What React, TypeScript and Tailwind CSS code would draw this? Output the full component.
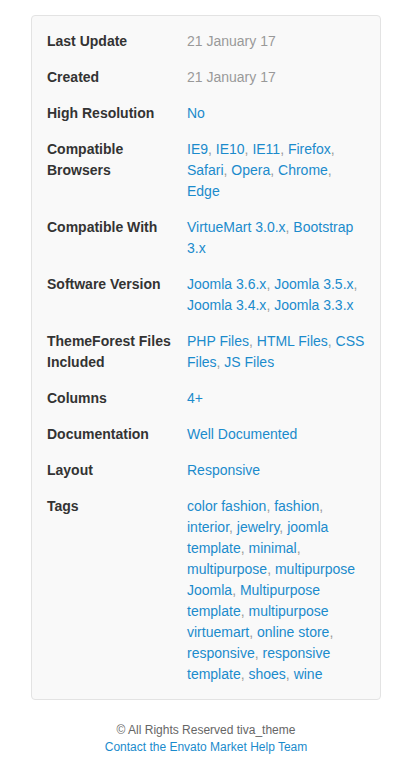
const rows: { label: string; values: string[]; plain?: boolean }[] = [
  { label: 'Last Update', values: ['21 January 17'], plain: true },
  { label: 'Created', values: ['21 January 17'], plain: true },
  { label: 'High Resolution', values: ['No'] },
  { label: 'Compatible Browsers', values: ['IE9', 'IE10', 'IE11', 'Firefox', 'Safari', 'Opera', 'Chrome', 'Edge'] },
  { label: 'Compatible With', values: ['VirtueMart 3.0.x', 'Bootstrap 3.x'] },
  { label: 'Software Version', values: ['Joomla 3.6.x', 'Joomla 3.5.x', 'Joomla 3.4.x', 'Joomla 3.3.x'] },
  { label: 'ThemeForest Files Included', values: ['PHP Files', 'HTML Files', 'CSS Files', 'JS Files'] },
  { label: 'Columns', values: ['4+'] },
  { label: 'Documentation', values: ['Well Documented'] },
  { label: 'Layout', values: ['Responsive'] },
  {
    label: 'Tags',
    values: [
      'color fashion', 'fashion', 'interior', 'jewelry', 'joomla template', 'minimal',
      'multipurpose', 'multipurpose Joomla', 'Multipurpose template', 'multipurpose virtuemart',
      'online store', 'responsive', 'responsive template', 'shoes', 'wine',
    ],
  },
];

const App = () => {
  return (
    <div className="min-h-screen bg-white pt-[15px] pb-[20px] pl-[31px] pr-[34px] font-['Liberation_Sans',Arial,sans-serif]">
      <div className="bg-[#f9f9f9] border border-[#e3e3e3] rounded-[4px] py-[7px] px-[15px]">
        {rows.map((row) => (
          <div key={row.label} className="flex py-[7.5px] text-[14px] leading-[21px]">
            <div className="w-[140px] shrink-0 pr-[10px] font-bold text-[#333]">{row.label}</div>
            <div className="flex-1 min-w-0">
              {row.plain ? (
                <span className="text-[#999]">{row.values[0]}</span>
              ) : (
                row.values.map((v, i) => (
                  <span key={v + i}>
                    <a href="#" className="text-[#1b8bcc]">{v}</a>
                    {i < row.values.length - 1 && <span className="text-[#999]">, </span>}
                  </span>
                ))
              )}
            </div>
          </div>
        ))}
      </div>
      <div className="mt-[22px] text-center text-[12px] leading-[17px]">
        <div className="text-[#666]">© All Rights Reserved tiva_theme</div>
        <a href="#" className="text-[#1b8bcc]">Contact the Envato Market Help Team</a>
      </div>
    </div>
  );
};

export default App;
